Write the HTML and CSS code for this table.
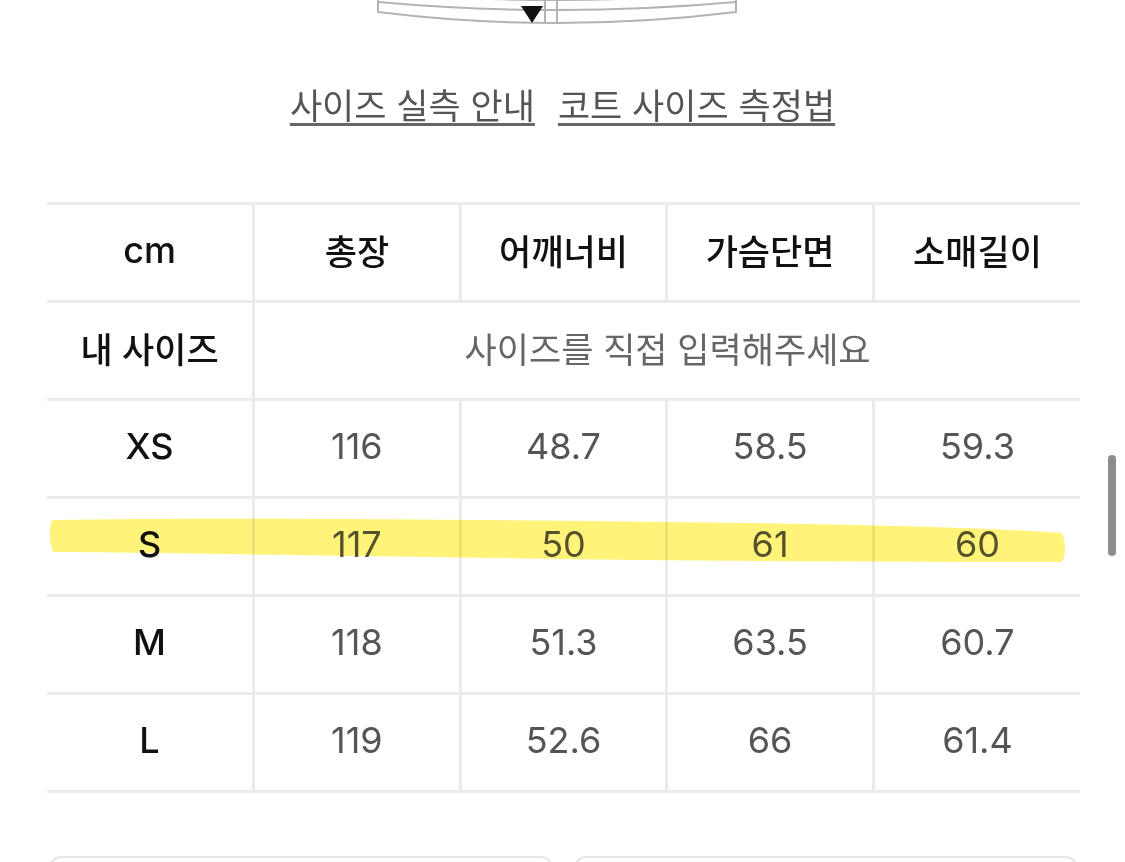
FILE: index.html
```html
<!DOCTYPE html>
<html lang="ko">
<head>
<meta charset="utf-8">
<title>사이즈 실측 안내</title>
<link rel="stylesheet" href="styles.css">
</head>
<body>
<div class="page">
  <div class="figure">
    <svg class="coat-hem" width="1125" height="26" viewBox="0 0 1125 26">
      <path d="M378,-6 L378,12 Q557,34 736,12 L736,-6" fill="none" stroke="#b3b3b3" stroke-width="2"/>
      <path d="M378,2 Q557,18 736,2" fill="none" stroke="#b3b3b3" stroke-width="2"/>
      <path d="M378,-8 Q557,8 736,-8" fill="none" stroke="#b3b3b3" stroke-width="2"/>
      <line x1="545" y1="0" x2="545" y2="23" stroke="#b3b3b3" stroke-width="2"/>
      <line x1="557" y1="0" x2="557" y2="23" stroke="#b3b3b3" stroke-width="2"/>
      <path d="M521,6 L543,6 L532,23 Z" fill="#111"/>
    </svg>
  </div>

  <nav class="guide-links">
    <a class="guide-link" href="#">사이즈 실측 안내</a>
    <a class="guide-link" href="#">코트 사이즈 측정법</a>
  </nav>

  <div class="table-wrap">
    <table class="size-table">
      <tr class="head-row">
        <td class="label">cm</td>
        <td class="head">총장</td>
        <td class="head">어깨너비</td>
        <td class="head">가슴단면</td>
        <td class="head">소매길이</td>
      </tr>
      <tr>
        <td class="label label-ko">내 사이즈</td>
        <td class="prompt" colspan="4">사이즈를 직접 입력해주세요</td>
      </tr>
      <tr>
        <td class="label">XS</td>
        <td class="val">116</td>
        <td class="val">48.7</td>
        <td class="val">58.5</td>
        <td class="val">59.3</td>
      </tr>
      <tr>
        <td class="label">S</td>
        <td class="val">117</td>
        <td class="val">50</td>
        <td class="val">61</td>
        <td class="val">60</td>
      </tr>
      <tr>
        <td class="label">M</td>
        <td class="val">118</td>
        <td class="val">51.3</td>
        <td class="val">63.5</td>
        <td class="val">60.7</td>
      </tr>
      <tr>
        <td class="label">L</td>
        <td class="val">119</td>
        <td class="val">52.6</td>
        <td class="val">66</td>
        <td class="val">61.4</td>
      </tr>
    </table>
    <svg class="highlight" width="1033" height="62" viewBox="0 0 1033 62">
      <path d="M5,15 C200,12 450,15 700,18 C850,20 960,24 1015,28 C1019,38 1019,50 1015,57 C850,57 650,56 450,53 C250,50 120,48 6,47 C2,36 2,25 5,15 Z" fill="#fff37a"/>
    </svg>
  </div>

  <div class="buttons">
    <div class="btn"></div>
    <div class="btn"></div>
  </div>

  <div class="scrollbar"></div>
</div>
</body>
</html>
```

FILE: styles.css
```css
html, body {
  margin: 0;
  padding: 0;
  background: #fff;
}

body {
  width: 1125px;
  height: 862px;
  overflow: hidden;
  font-family: "Inter", "Noto Sans CJK KR", sans-serif;
  color: #111;
}

.page {
  position: relative;
  width: 1125px;
  height: 862px;
}

.figure {
  height: 26px;
}

.coat-hem {
  display: block;
}

.guide-links {
  margin-top: 58px;
  display: flex;
  justify-content: center;
  gap: 23px;
  height: 40px;
  line-height: 40px;
}

.guide-link {
  font-family: "Noto Sans CJK KR", sans-serif;
  font-size: 35px;
  color: #555;
  text-decoration: underline;
  text-decoration-thickness: 3px;
  text-underline-offset: 4px;
  text-decoration-color: #666;
}

.table-wrap {
  position: relative;
  margin-top: 78px;
  margin-left: 47px;
  width: 1033px;
}

.size-table {
  width: 1033px;
  table-layout: fixed;
  border-collapse: collapse;
}

.size-table tr {
  height: 98px;
}

.size-table td {
  border: 3px solid #ebebeb;
  padding: 0 0 6px;
  text-align: center;
  vertical-align: middle;
}

.size-table tr td:first-child {
  border-left: none;
}

.size-table tr td:last-child {
  border-right: none;
}

.label {
  font-family: "Inter", "Noto Sans CJK KR", sans-serif;
  font-size: 36px;
  font-weight: 500;
  color: #111;
}

.label-ko {
  font-size: 35px;
}

.head {
  font-family: "Noto Sans CJK KR", sans-serif;
  font-size: 35px;
  font-weight: 500;
  color: #111;
}

.prompt {
  font-family: "Noto Sans CJK KR", sans-serif;
  font-size: 35px;
  color: #666;
}

.val {
  font-family: "Inter", sans-serif;
  font-size: 36px;
  color: #555;
}

.highlight {
  position: absolute;
  left: 0;
  top: 303px;
  mix-blend-mode: multiply;
  pointer-events: none;
}

.buttons {
  margin-top: 63px;
  margin-left: 49px;
  width: 1029px;
  display: flex;
  gap: 21px;
}

.btn {
  flex: 1;
  height: 60px;
  border: 2px solid #e6e6e6;
  border-radius: 12px;
}

.scrollbar {
  position: absolute;
  left: 1108px;
  top: 455px;
  width: 8px;
  height: 101px;
  border-radius: 4px;
  background: #8c8c8c;
}
```
